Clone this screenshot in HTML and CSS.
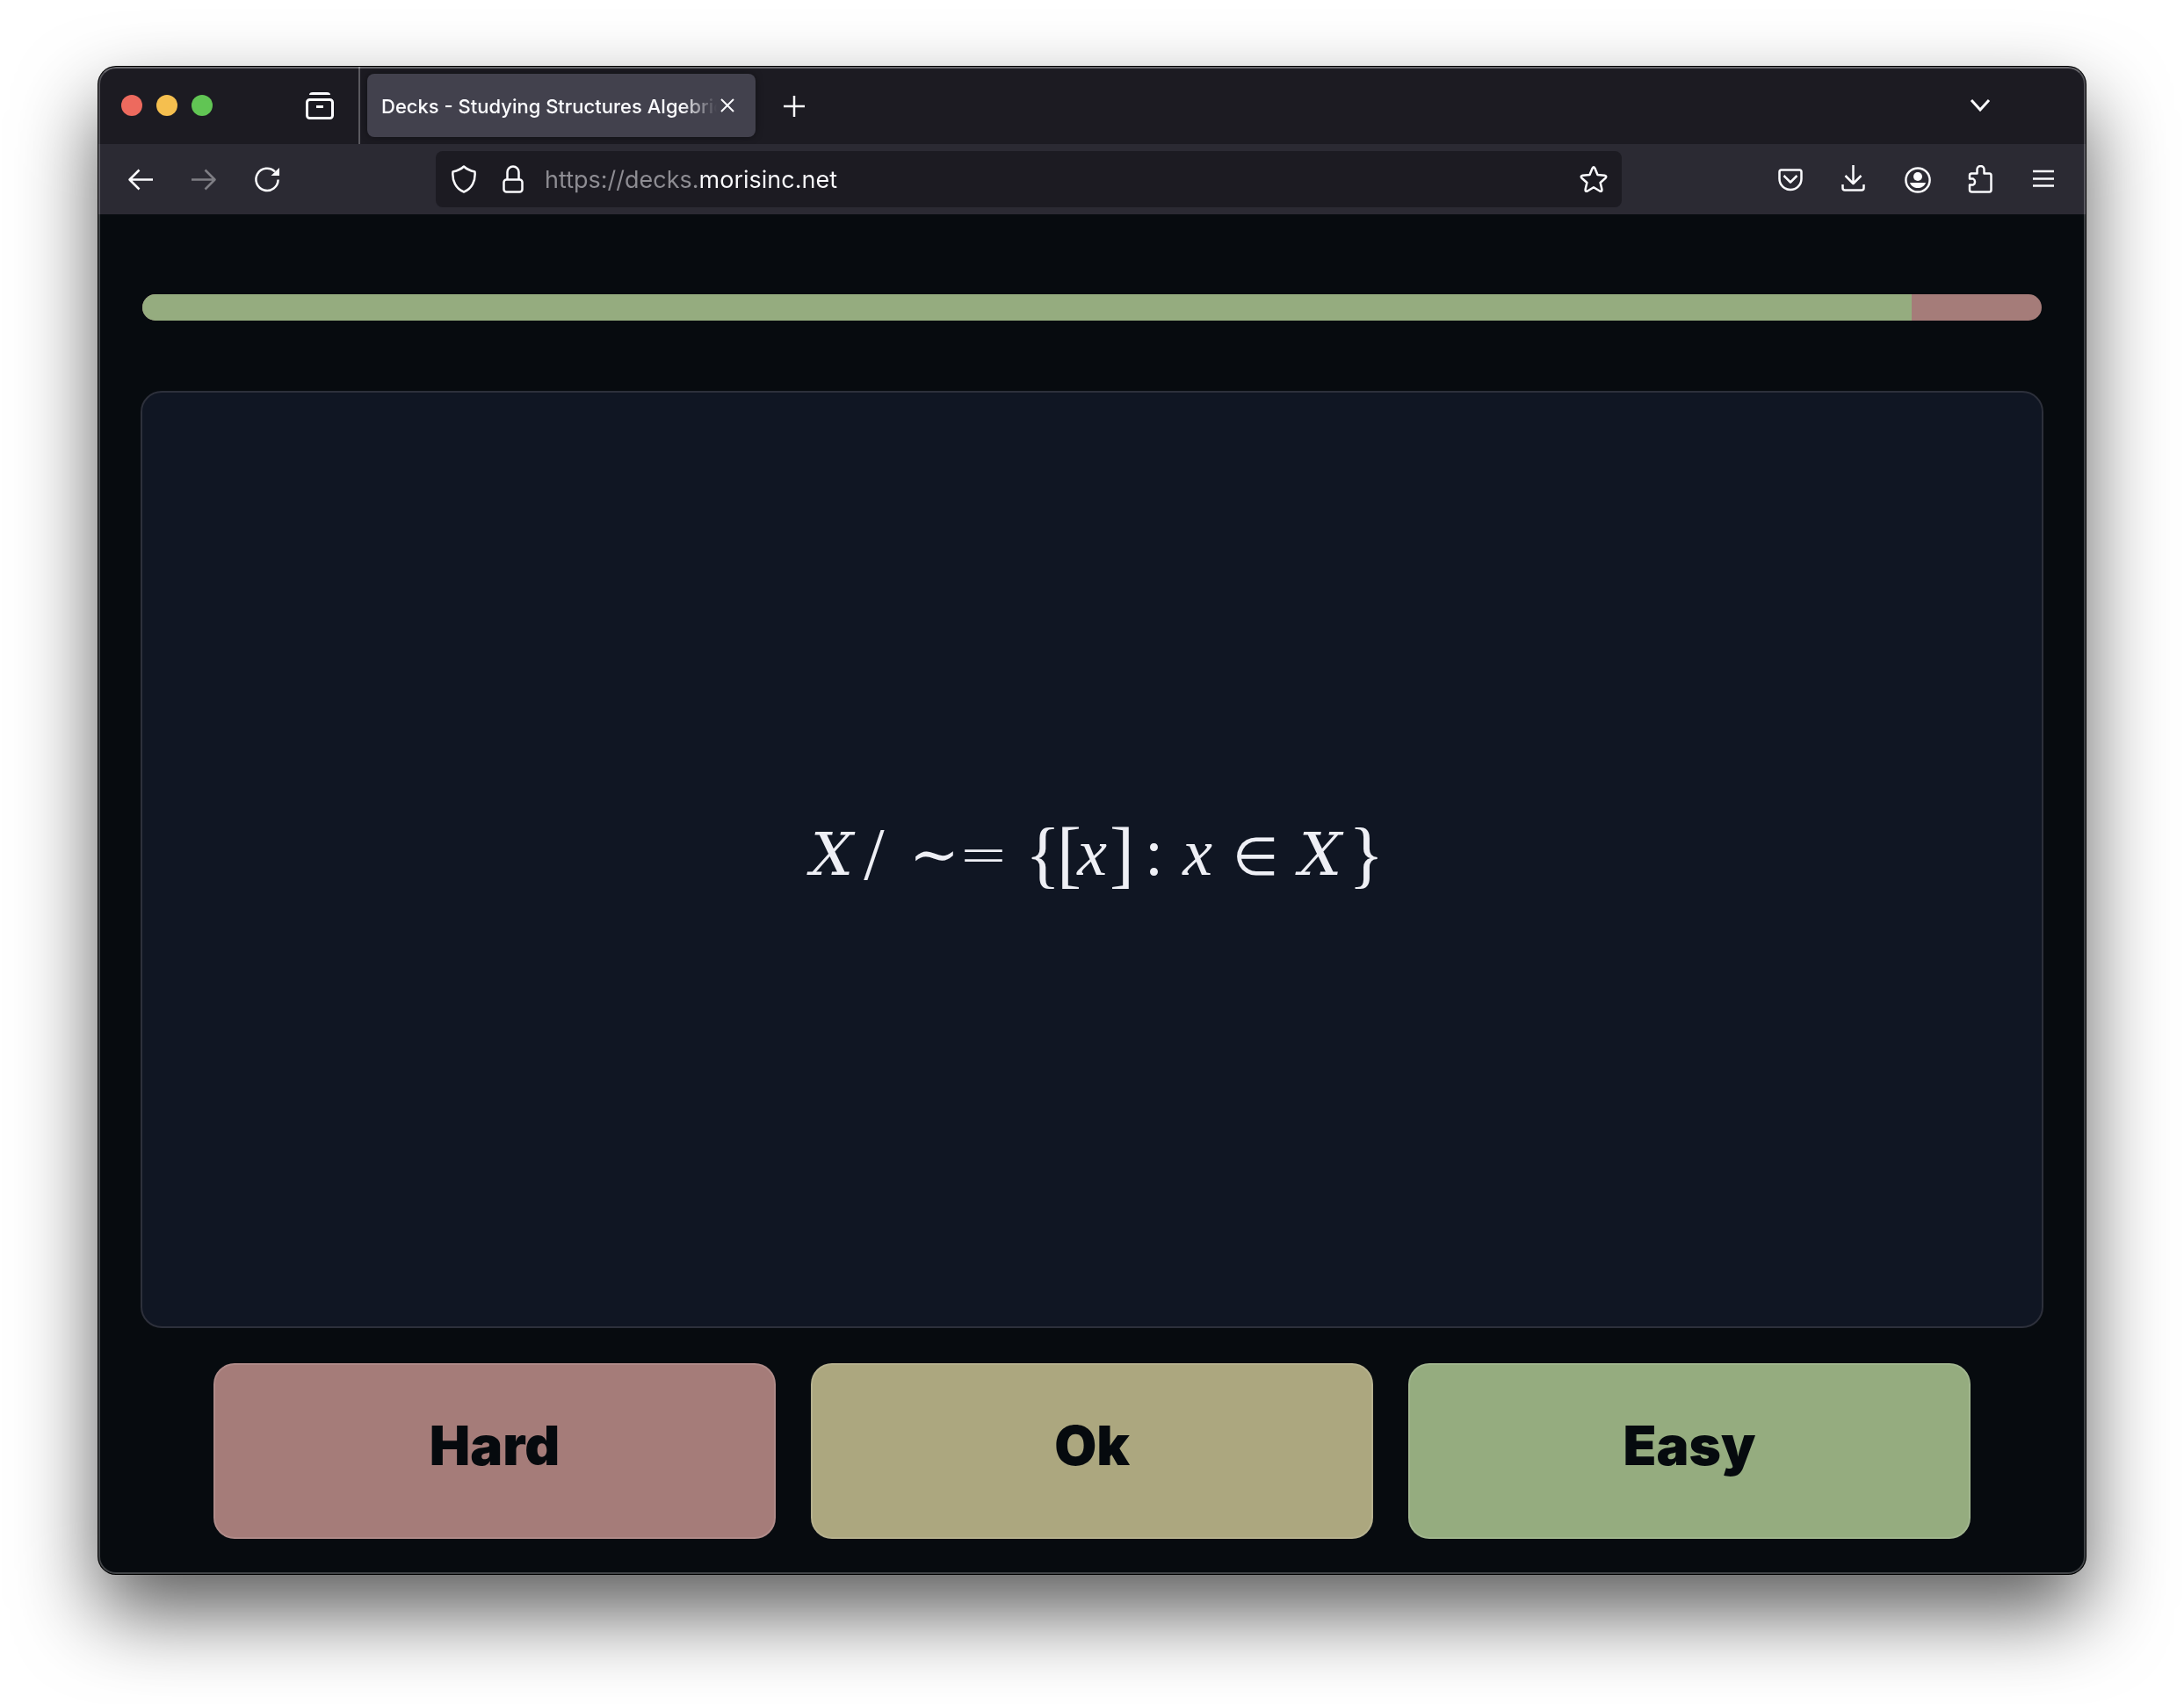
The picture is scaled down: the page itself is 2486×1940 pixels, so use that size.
FILE: index.html
```html
<!DOCTYPE html>
<html lang="en">
<head>
<meta charset="utf-8">
<meta name="viewport" content="width=device-width, initial-scale=1">
<title>Decks - Studying Structures Algebric</title>
<link rel="stylesheet" href="styles.css">
</head>
<body>
<div class="window">
  <header class="tabbar">
    <div class="lights">
      <button class="light close" aria-label="Close window"></button>
      <button class="light minimise" aria-label="Minimise window"></button>
      <button class="light maximise" aria-label="Maximise window"></button>
    </div>
    <button class="tool" aria-label="Recent browsing">
      <svg class="icon" viewBox="0 0 32 32"><path d="M5.500 4C5.500 2.500 6.500 2.500 8 2.500H24C25.500 2.500 26.500 2.500 26.500 4"/><rect x="1.500" y="9.500" width="29" height="21" rx="3"/><path d="M12 17.500H20"/></svg>
    </button>
    <div class="tabs">
      <div class="tab">
        <span class="tab-title">Decks - Studying Structures Algebric</span>
        <button class="tab-close" aria-label="Close tab"><svg viewBox="0 0 16 16"><path d="M1 1L15 15M15 1L1 15"/></svg></button>
      </div>
      <button class="tool" aria-label="New tab"><svg class="icon thin" viewBox="0 0 32 32"><path d="M16 5V29M4 17H28"/></svg></button>
    </div>
    <button class="tool" aria-label="List all tabs"><svg class="icon" viewBox="0 0 32 32"><path d="M6 10L16 21L26 10"/></svg></button>
  </header>

  <nav class="toolbar" aria-label="Navigation">
    <button class="tool" aria-label="Back"><svg class="icon" viewBox="0 0 32 32"><path d="M30 16.500H3M14.500 5.500L3.500 16.500L14.500 27.500"/></svg></button>
    <button class="tool" aria-label="Forward" disabled><svg class="icon" viewBox="0 0 32 32"><path d="M2 16.500H29M17.500 5.500L28.500 16.500L17.500 27.500"/></svg></button>
    <button class="tool" aria-label="Reload"><svg class="icon" viewBox="0 0 32 32"><path d="M28.600 16.500A12.600 12.600 0 1 1 25 7.500"/><path class="solid" d="M30 3V12H20.500Z"/></svg></button>
    <form class="urlbar">
      <svg class="icon" viewBox="0 0 32 32" aria-hidden="true"><path d="M16 1.500C19 4.500 24 6.500 28.500 7.500C29.500 18 25 27 16 30.500C7 27 2.500 18 3.500 7.500C8 6.500 13 4.500 16 1.500Z"/></svg>
      <svg class="icon" viewBox="0 0 32 32" aria-hidden="true"><rect x="5.500" y="16.500" width="21" height="14" rx="3"/><path d="M9.500 16V8A6.500 6.500 0 0 1 22.500 8V16"/></svg>
      <input class="url" type="text" aria-label="Address" value="https://decks.morisinc.net">
      <button class="bookmark" type="button" aria-label="Bookmark this page"><svg class="icon" viewBox="0 0 32 32"><path d="M14.600 3.600Q16 1 17.400 3.600L20.500 11L28.500 11.800Q31.500 12.400 29.500 14.700L23.600 20L25.400 27.500Q25.700 30.600 23 29.500L16 25.300L9 29.500Q6.300 30.600 6.600 27.500L8.400 20L2.500 14.700Q.5 12.400 3.500 11.800L11.500 11Z"/></svg></button>
    </form>
    <button class="tool" aria-label="Save to Pocket"><svg class="icon" viewBox="0 0 32 32"><path d="M5.500 5.500H26.500Q28.500 5.500 28.500 8V15.500A12.500 12.500 0 0 1 3.500 15.500V8Q3.500 5.500 5.500 5.500Z"/><path d="M8.500 12L16 19.500L23.500 12"/></svg></button>
    <button class="tool" aria-label="Downloads"><svg class="icon" viewBox="0 0 32 32"><path d="M15.500 0V21M6.500 12L15.500 21L24.500 12"/><path d="M3.500 22V26Q3.500 28.500 6 28.500H25Q27.500 28.500 27.500 26V22"/></svg></button>
    <button class="tool" aria-label="Account"><svg class="icon" viewBox="0 0 32 32"><circle cx="17" cy="17" r="13.600"/><circle class="solid" cx="17" cy="13" r="5"/><path class="solid" d="M8 20H26C24.500 24 21 26 17 26S9.500 24 8 20Z"/></svg></button>
    <button class="tool" aria-label="Extensions"><svg class="icon" viewBox="0 0 32 32"><path d="M5.500 9.500H12.500V5A3.500 3.500 0 0 1 20.500 5V9.500H26.500Q28.500 9.500 28.500 12V28Q28.500 30.500 26.500 30.500H6.500Q4 30.500 4 28V22.500H8A4 4 0 0 0 8 15.500H4V11.500Q4 9.500 6.500 9.500Z"/></svg></button>
    <button class="tool" aria-label="Menu"><svg class="icon" viewBox="0 0 32 32"><path d="M4 7H28M4 15.500H28M4 23.500H28"/></svg></button>
  </nav>

  <main class="page">
    <div class="progress" role="progressbar" aria-label="Deck progress" aria-valuenow="93" aria-valuemin="0" aria-valuemax="100">
      <div class="progress-done" style="width:93.15%"></div>
    </div>
    <section class="card">
      <div class="formula">
        <i class="cap">X</i><span class="slash">/</span>
        <span class="tilde">∼</span><span class="equals">=</span>
        <span class="brace open">{</span><span class="bracket">[</span><i class="low">x</i><span class="bracket">]</span>
        <span class="colon rel">:</span>
        <i class="low">x</i>
        <span class="member rel">∈</span>
        <i class="cap">X</i><span class="brace">}</span>
      </div>
    </section>
    <div class="answers">
      <button class="answer hard">Hard</button>
      <button class="answer ok">Ok</button>
      <button class="answer easy">Easy</button>
    </div>
  </main>
</div>
</body>
</html>
```

FILE: styles.css
```css
*, *::before, *::after { box-sizing: border-box; }

body {
  margin: 0;
  min-height: 100vh;
  padding: 76px 112px 148px;
  display: flex;
  background: #fff;
  font-family: Inter, "Liberation Sans", sans-serif;
  color: #fbfbfe;
}

button, input {
  font: inherit;
  color: inherit;
  background: none;
  border: 0;
  margin: 0;
  padding: 0;
}

.window {
  position: relative;
  flex: 1;
  min-width: 0;
  display: flex;
  flex-direction: column;
  overflow: hidden;
  border-radius: 20px;
  background: #070b0f;
  box-shadow: 0 0 0 1px #000, 0 44px 92px rgba(0, 0, 0, .64);
}

/* light rim over the window's edge */
.window::after {
  content: "";
  position: absolute;
  inset: 0;
  border: 2px solid rgba(255, 255, 255, .23);
  border-top-color: rgba(255, 255, 255, .34);
  border-radius: inherit;
  pointer-events: none;
}

/* icons */
.icon {
  display: block;
  width: 32px;
  height: 32px;
  flex: none;
  fill: none;
  stroke: #fbfbfe;
  stroke-width: 3;
}
.toolbar .icon { stroke-width: 2.5; stroke-linejoin: round; }
.thin { stroke-width: 2.5; }
.icon .solid { fill: #fbfbfe; stroke: none; }

.tool {
  width: 72px;
  height: 64px;
  flex: none;
  display: grid;
  place-items: center;
}
.tool:disabled { opacity: .4; }

/* tab strip */
.tabbar {
  height: 88px;
  display: flex;
  align-items: center;
  padding: 0 84px 0 26px;
  background: #1c1b22;
}
.lights { display: flex; gap: 16px; margin-right: 86px; }
.light { width: 24px; height: 24px; border-radius: 50%; }
.close { background: #ed6a5e; }
.minimise { background: #f5bf4f; }
.maximise { background: #61c554; }

.tabs {
  flex: 1;
  min-width: 0;
  align-self: stretch;
  display: flex;
  align-items: center;
  gap: 8px;
  margin-left: 8px;
  padding-left: 8px;
  border-left: 2px solid #5b5a60;
}
.tab {
  width: 442px;
  height: 72px;
  display: flex;
  align-items: center;
  gap: 4px;
  padding: 0 24px 0 16px;
  border-radius: 8px;
  background: #42414d;
  box-shadow: 0 0 8px rgba(0, 0, 0, .4);
}
.tab-title {
  flex: 1;
  min-width: 0;
  padding-top: 2px;
  overflow: hidden;
  white-space: nowrap;
  font-size: 22px;
  line-height: 32px;
  font-weight: 500;
  -webkit-mask-image: linear-gradient(to left, transparent, #000 40px);
  mask-image: linear-gradient(to left, transparent, #000 40px);
}
.tab-close svg {
  display: block;
  width: 16px;
  height: 16px;
  fill: none;
  stroke: #fbfbfe;
  stroke-width: 2;
}

/* navigation */
.toolbar {
  height: 80px;
  display: flex;
  align-items: center;
  padding: 0 12px;
  background: #2b2a33;
}
.urlbar {
  flex: 1;
  min-width: 0;
  height: 64px;
  margin: 0 156px;
  padding: 0 16px;
  display: flex;
  align-items: center;
  gap: 24px;
  border-radius: 8px;
  background: #1c1b22;
}
.url {
  flex: 1;
  min-width: 0;
  height: 40px;
  margin-left: -4px;
  font-size: 27px;
  outline: 0;
  color: transparent;
  background: linear-gradient(to right, #8e8d93 177px, #fbfbfe 177px);
  -webkit-background-clip: text;
  background-clip: text;
}

/* page */
.page {
  flex: 1;
  display: flex;
  flex-direction: column;
  padding: 91px 48px 40px;
}
.progress {
  height: 30px;
  margin: 0 2px 80px;
  overflow: hidden;
  border-radius: 15px;
  background: #a57c79;
}
.progress-done { height: 100%; background: #95ac7f; }

.card {
  flex: 1;
  display: grid;
  place-items: center;
  border: 2px solid #2d303b;
  border-radius: 24px;
  background: #101623;
}
.formula {
  display: flex;
  align-items: baseline;
  padding-bottom: 12px;
  font-family: "Liberation Serif", serif;
  font-size: 76px;
  line-height: 88px;
  color: #eeeff5;
}
.formula > * { text-align: center; }
.cap { width: 64px; font-family: "DejaVu Serif", serif; font-size: 68px; }
.low { width: 40px; }
.slash, .brace, .bracket { align-self: center; font-size: 84px; }
.slash { width: 32px; }
.tilde, .equals { width: 56px; font-size: 68px; }
.tilde { margin-left: 24px; font-family: "DejaVu Serif", serif; }
.equals, .member {
  font-family: "DejaVu Sans Light", "DejaVu Sans", sans-serif;
  font-weight: 200;
}
.member { width: 48px; font-size: 60px; }
.bracket, .colon { width: 20px; }
.brace { width: 36px; }
.rel { margin: 0 20px; }
.open { margin-left: 20px; }

.answers {
  display: grid;
  grid-template-columns: repeat(3, 1fr);
  gap: 40px;
  margin-top: 40px;
  padding: 0 83px;
}
.answer {
  height: 200px;
  padding-bottom: 12px;
  border: 2px solid rgba(255, 255, 255, .12);
  border-radius: 24px;
  background-clip: border-box;
  font-size: 62px;
  line-height: 72px;
  font-weight: 900;
  color: #060a0e;
}
.hard { background-color: #a57c79; }
.ok { background-color: #aca77f; }
.easy { background-color: #95ac7f; }
```
